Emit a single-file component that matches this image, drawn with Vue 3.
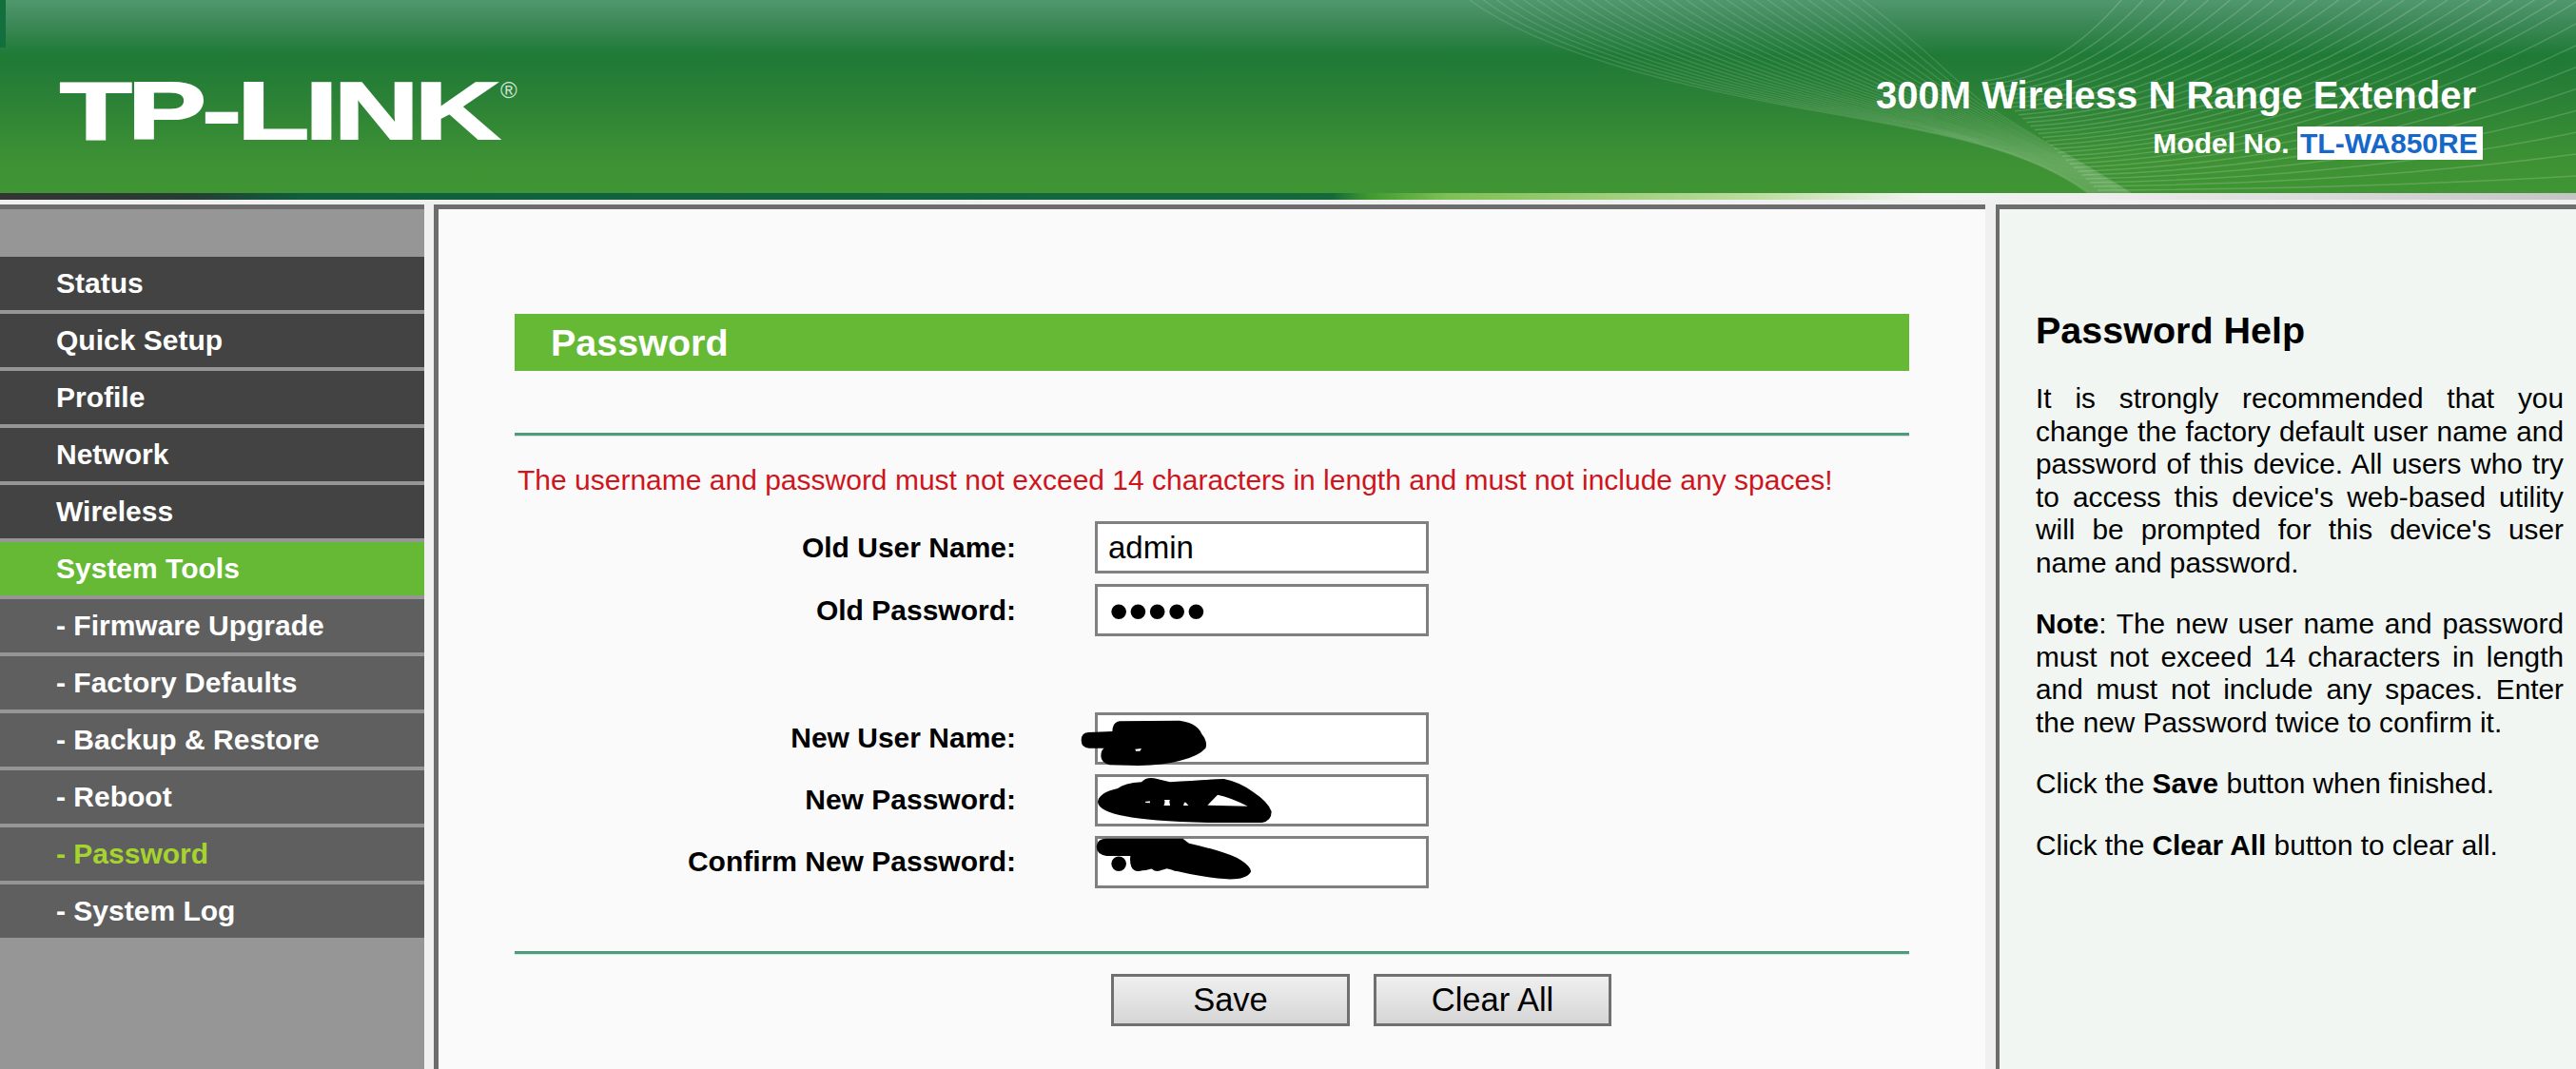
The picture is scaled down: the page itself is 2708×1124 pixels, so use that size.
<script setup>
const menu = [
  { t: 'Status', c: 'top' },
  { t: 'Quick Setup', c: 'top' },
  { t: 'Profile', c: 'top' },
  { t: 'Network', c: 'top' },
  { t: 'Wireless', c: 'top' },
  { t: 'System Tools', c: 'active' },
  { t: '- Firmware Upgrade', c: 'sub' },
  { t: '- Factory Defaults', c: 'sub' },
  { t: '- Backup & Restore', c: 'sub' },
  { t: '- Reboot', c: 'sub' },
  { t: '- Password', c: 'sub current' },
  { t: '- System Log', c: 'sub' },
]
const lo = [1545, 0, 1620, 55, 1760, 90, 1900, 115, 2040, 140, 2130, 155, 2195, 203]
const up = [1958, 0, 2000, 30, 2040, 70, 2075, 100, 2110, 130, 2190, 170, 2240, 203]
const fanA = Array.from({ length: 30 }, (_, i) => {
  const t = i / 29
  const p = lo.map((v, k) => (v + (up[k] - v) * t).toFixed(1))
  return `M${p[0]} ${p[1]}C${p[2]} ${p[3]} ${p[4]} ${p[5]} ${p[6]} ${p[7]}S${p[10]} ${p[11]} ${p[12]} ${p[13]}`
})
const fanB = Array.from({ length: 30 }, (_, i) => {
  const t = i / 29
  const sx = 2085 + t * 120
  const sy = 85 + t * 115
  const perim = t * 663
  const ex = perim < 478 ? 2230 + perim : 2708
  const ey = perim < 478 ? 0 : perim - 478
  const cx = sx + (ex - sx) * 0.55
  const cy = sy - (sy - ey) * 0.1
  return `M${sx.toFixed(1)} ${sy.toFixed(1)}Q${cx.toFixed(1)} ${cy.toFixed(1)} ${ex.toFixed(1)} ${ey.toFixed(1)}`
})
</script>

<template>
  <div class="page">
    <header class="header">
      <span class="strip"></span>
      <svg class="waves" width="2708" height="203" viewBox="0 0 2708 203" aria-hidden="true">
        <path v-for="(d, i) in fanA" :key="'a' + i" :d="d" class="wave-a" />
        <path v-for="(d, i) in fanB" :key="'b' + i" :d="d" class="wave-b" />
      </svg>
      <svg class="logo" width="580" height="90" viewBox="0 0 580 90" role="img" aria-label="TP-LINK">
        <text class="logo-word" transform="translate(63 78) scale(1.44 1)">TP-LINK</text>
        <text class="logo-reg" x="526" y="35">®</text>
      </svg>
      <div class="product">
        <div class="product-name">300M Wireless N Range Extender</div>
        <div class="model">Model No. <span class="model-id">TL-WA850RE</span></div>
      </div>
    </header>
    <div class="band"></div>

    <main class="main">
      <nav class="side">
        <a v-for="m in menu" :key="m.t" class="item" :class="m.c">{{ m.t }}</a>
      </nav>

      <section class="content">
        <h1 class="bar">Password</h1>
        <hr class="rule first" />
        <p class="warn">The username and password must not exceed 14 characters in length and must not include any spaces!</p>

        <div class="rows old">
          <label class="label">Old User Name:</label>
          <input class="inp" type="text" value="admin" />
          <label class="label">Old Password:</label>
          <input class="inp pw" type="password" value="admin" />
        </div>

        <div class="rows new">
          <label class="label">New User Name:</label>
          <input class="inp" type="text" />
          <label class="label">New Password:</label>
          <input class="inp pw" type="password" value="admin" />
          <label class="label">Confirm New Password:</label>
          <input class="inp pw" type="password" value="admin" />
          <svg class="scribble" width="240" height="195" viewBox="0 0 720 585" aria-hidden="true">
            <path fill-rule="evenodd" d="M20 100Q20 75 45 75L118 72Q118 45 140 40L330 38Q385 45 400 80Q420 105 412 125Q390 150 330 165Q280 178 200 180L110 178Q82 170 82 150Q82 130 92 125L45 125Q20 125 20 100ZM190 128L210 126L205 134L192 134Z" />
            <path fill-rule="evenodd" d="M72 295Q75 265 135 252Q155 235 210 232Q225 215 250 220L300 232Q400 225 470 222Q520 232 560 262Q610 295 620 325Q620 355 590 360L420 360Q230 355 160 340Q75 325 72 295ZM418 305L450 272Q490 280 545 308ZM218 294L240 292L240 298L218 297ZM278 288H300V306H278ZM338 296L350 296L358 306L338 306Z" />
            <path d="M68 435Q70 410 100 410L340 410L360 425Q450 445 510 470Q555 495 555 515Q540 540 480 538Q380 530 290 505Q265 515 245 505Q210 515 190 510Q170 495 175 465L100 465Q68 460 68 435Z" />
          </svg>
        </div>

        <hr class="rule second" />
        <div class="actions">
          <button class="btn" type="button">Save</button>
          <button class="btn last" type="button">Clear All</button>
        </div>
      </section>

      <aside class="help">
        <h2 class="help-title">Password Help</h2>
        <p>It is strongly recommended that you change the factory default user name and password of this device. All users who try to access this device's web-based utility will be prompted for this device's user name and password.</p>
        <p><b>Note</b>: The new user name and password must not exceed 14 characters in length and must not include any spaces. Enter the new Password twice to confirm it.</p>
        <p>Click the <b>Save</b> button when finished.</p>
        <p>Click the <b>Clear All</b> button to clear all.</p>
      </aside>
    </main>
  </div>
</template>

<style>
html, body { margin: 0; background: #f0f0f0; overflow: hidden; }
</style>

<style scoped>
.page {
  width: 2708px;
  height: 1124px;
  overflow: hidden;
  display: flex;
  flex-direction: column;
  background: #f0f0f0;
  font-family: "Liberation Sans", Arial, sans-serif;
  color: #000;
}
.header {
  position: relative;
  height: 203px;
  flex: none;
  background: linear-gradient(180deg, #50976e 0, #3f8a5a 22px, #1f7a36 58px, #2a8036 100px, #3e9234 170px, #3f9433 203px);
}
.strip { position: absolute; left: 0; top: 0; width: 6px; height: 50px; background: #12703f; }
.waves { position: absolute; left: 0; top: 0; }
.wave-a { fill: none; stroke: #fff; stroke-opacity: .12; stroke-width: 1.5; }
.wave-b { fill: none; stroke: #fff; stroke-opacity: .17; stroke-width: 1.5; }
.logo { position: absolute; left: 0; top: 68px; overflow: visible; }
.logo-word {
  font-family: "Liberation Sans", Arial, sans-serif;
  font-weight: 700;
  font-size: 86px;
  letter-spacing: -3px;
  fill: #fff;
  stroke: #fff;
  stroke-width: 2px;
}
.logo-reg { font-family: "Liberation Sans", Arial, sans-serif; font-size: 24px; fill: #cfe3d2; }
.product {
  position: absolute;
  right: 98px;
  top: 75px;
  color: #fff;
  font-weight: 700;
  text-align: right;
}
.product-name { font-size: 40px; line-height: 50px; margin-right: 7px; }
.model { font-size: 30px; line-height: 35px; margin-top: 8px; white-space: nowrap; }
.model-id {
  display: inline-block;
  background: #fff;
  color: #1668c8;
  padding: 0 0 0 3px;
  width: 195px;
  box-sizing: border-box;
  text-align: left;
}
.band {
  height: 7px;
  flex: none;
  margin-bottom: 5px;
  background: linear-gradient(90deg, #343434 0, #263d33 200px, #0f5f3e 320px, #15683c 1400px, #3f9a30 1440px, #7fbf55 1520px, #bcdca0 1850px, #f2f5f0 2020px, #eeeeee 2200px, #c4c4c4 2708px);
}
.main { flex: 1; display: flex; min-height: 0; }
.side {
  width: 446px;
  flex: none;
  box-sizing: border-box;
  border-top: 5px solid #6d6d6d;
  background: #969696;
  padding-top: 50px;
  display: flex;
  flex-direction: column;
  gap: 4px;
}
.item {
  height: 56px;
  line-height: 56px;
  padding-left: 59px;
  font-size: 30px;
  font-weight: 700;
  color: #fff;
}
.top { background: #434343; }
.active { background: #66b934; }
.sub { background: #5f5f5f; }
.current { color: #a6d42e; }

.content {
  width: 1631px;
  flex: none;
  margin-left: 10px;
  box-sizing: border-box;
  border-left: 5px solid #6d6d6d;
  border-top: 5px solid #6d6d6d;
  background: #fafafa;
  padding: 110px 80px 0 80px;
}
.bar {
  margin: 0;
  height: 60px;
  line-height: 60px;
  padding-left: 38px;
  background: #66b934;
  color: #fff;
  font-size: 39.5px;
  font-weight: 700;
}
.rule {
  margin: 0;
  height: 3px;
  border: 0;
  background: #4f9a7c;
  box-shadow: 0 1px 1px #cfe3d8;
}
.rule.first { margin-top: 65px; }
.rule.second { margin-top: 66px; }
.warn {
  margin: 29px 0 0 3px;
  line-height: 36px;
  font-size: 30px;
  color: #d0141c;
  white-space: nowrap;
}
.rows {
  display: grid;
  grid-template-columns: 527px 351px;
  column-gap: 83px;
  align-items: center;
}
.rows.old { margin-top: 25px; row-gap: 11px; }
.rows.new { margin-top: 80px; row-gap: 10px; position: relative; }
.new .label { padding-bottom: 2px; }
.label { font-size: 30px; font-weight: 700; text-align: right; }
.inp {
  box-sizing: border-box;
  width: 351px;
  height: 55px;
  border: 3px solid #808080;
  border-radius: 0;
  outline: 0;
  background: #fff;
  padding: 0 11px;
  font: 33px "Liberation Sans", Arial, sans-serif;
  color: #000;
}
.pw { font-size: 58px; padding-left: 12px; }
.scribble { position: absolute; left: 589px; top: -4px; fill: #000; }
.actions {
  margin: 21px 0 0 627px;
  display: flex;
  gap: 25px;
}
.btn {
  box-sizing: border-box;
  width: 251px;
  height: 55px;
  border: 3px solid #707070;
  border-radius: 0;
  background: linear-gradient(180deg, #efefef, #d6d6d6);
  font: 34.5px "Liberation Sans", Arial, sans-serif;
  color: #000;
  padding: 0;
}
.btn.last { width: 250px; }
.help {
  flex: 1;
  margin-left: 11px;
  box-sizing: border-box;
  border-left: 4px solid #6d6d6d;
  border-top: 5px solid #6d6d6d;
  background: #f1f6f2;
  padding: 105px 13px 0 38px;
  font-size: 29.8px;
  line-height: 34.5px;
}
.help-title {
  margin: 0 0 33px;
  font-size: 39.5px;
  line-height: 44px;
  font-weight: 700;
}
.help p { margin: 0 0 30px; text-align: justify; }
</style>
